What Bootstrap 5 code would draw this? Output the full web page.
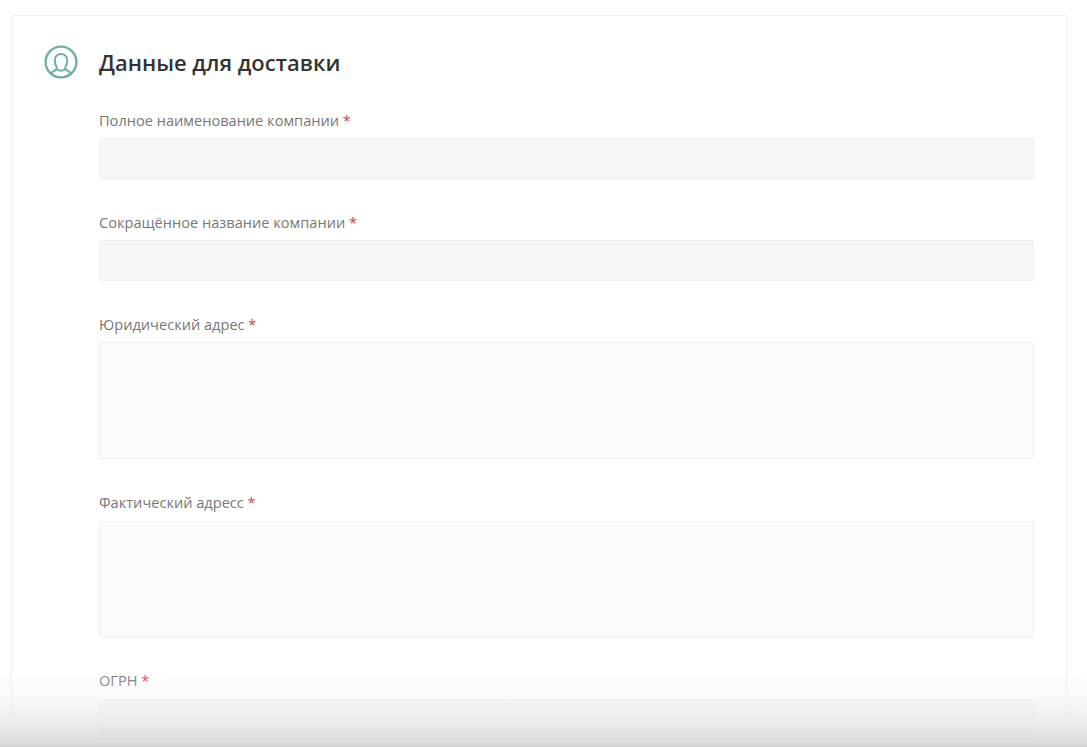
<!DOCTYPE html>
<html lang="ru">
<head>
<meta charset="utf-8">
<title>Данные для доставки</title>
<link href="https://cdn.jsdelivr.net/npm/bootstrap@5.3.0/dist/css/bootstrap.min.css" rel="stylesheet">
<style>
html, body { height: 747px; overflow: hidden; background: #fff; }
body { font-family: "Open Sans", sans-serif; padding: 15px 20px 0 11px; }
.panel { border: 1px solid #f0f0f0; border-bottom: 0; height: 760px; padding: 29px 32px 0 32px; }
.head-row { gap: 21px; height: 34px; margin-bottom: 31.9px; }
.head-title { font-size: 22px; font-weight: 600; color: #333; margin: 0; line-height: 34px; }
.ring { width: 34px; height: 34px; flex: none; }
.body-col { margin-left: 55px; }
.fld { margin-bottom: 33.6px; }
.fld-wide { margin-bottom: 34.6px; }
.fld-wide-end { margin-bottom: 34.3px; }
.fld label { display: block; font-size: 14.58px; font-weight: 400; color: #777; line-height: 19px; margin-bottom: 8.4px; }
.fld-last label { margin-bottom: 8.7px; }
.fld label span { color: #d9403f; }
.fld .form-control { background: #f7f7f7; border: 1px solid #efefef; border-radius: 2px; height: 41px; display: block; box-shadow: none; }
.fld textarea.form-control { background: #fbfbfb; height: 116.4px; resize: none; }
.fade-bottom { position: fixed; left: 0; right: 0; bottom: 0; height: 77px; pointer-events: none;
  background: linear-gradient(to bottom, rgba(255,255,255,0) 0%, rgba(240,240,240,.45) 40%, rgba(228,228,228,.7) 70%, rgba(215,215,215,.88) 95%, rgba(205,205,205,.95) 100%); }
</style>
</head>
<body>
<div class="panel">
  <div class="d-flex align-items-center head-row">
    <svg class="ring" viewBox="0 0 34 34" fill="none" stroke="#72aea4" stroke-width="2.4">
      <circle cx="17" cy="17" r="15.4"/>
      <path d="M13 22.500C11.500 20.800 10.800 18 10.800 15.500c0-4 2.500-6.500 6.200-6.500s6.200 2.500 6.200 6.500c0 2.500-.7 5.300-2.200 7M13 22.500c.2 2.600-3.200 3.300-6 5.800M21 22.500c-.2 2.600 3.200 3.300 6 5.800M13.200 24.500c2 1.500 5.600 1.500 7.600 0" stroke-width="2"/>
    </svg>
    <h1 class="head-title">Данные для доставки</h1>
  </div>
  <form class="body-col">
    <div class="fld"><label for="a">Полное наименование компании <span>*</span></label><input id="a" class="form-control" type="text"></div>
    <div class="fld"><label for="b">Сокращённое название компании <span>*</span></label><input id="b" class="form-control" type="text"></div>
    <div class="fld fld-wide"><label for="c">Юридический адрес <span>*</span></label><textarea id="c" class="form-control"></textarea></div>
    <div class="fld fld-wide-end"><label for="d">Фактический адресс <span>*</span></label><textarea id="d" class="form-control"></textarea></div>
    <div class="fld fld-last"><label for="e">ОГРН <span>*</span></label><input id="e" class="form-control" type="text"></div>
  </form>
</div>
<div class="fade-bottom"></div>
<script src="https://cdn.jsdelivr.net/npm/bootstrap@5.3.0/dist/js/bootstrap.bundle.min.js"></script>
</body>
</html>
